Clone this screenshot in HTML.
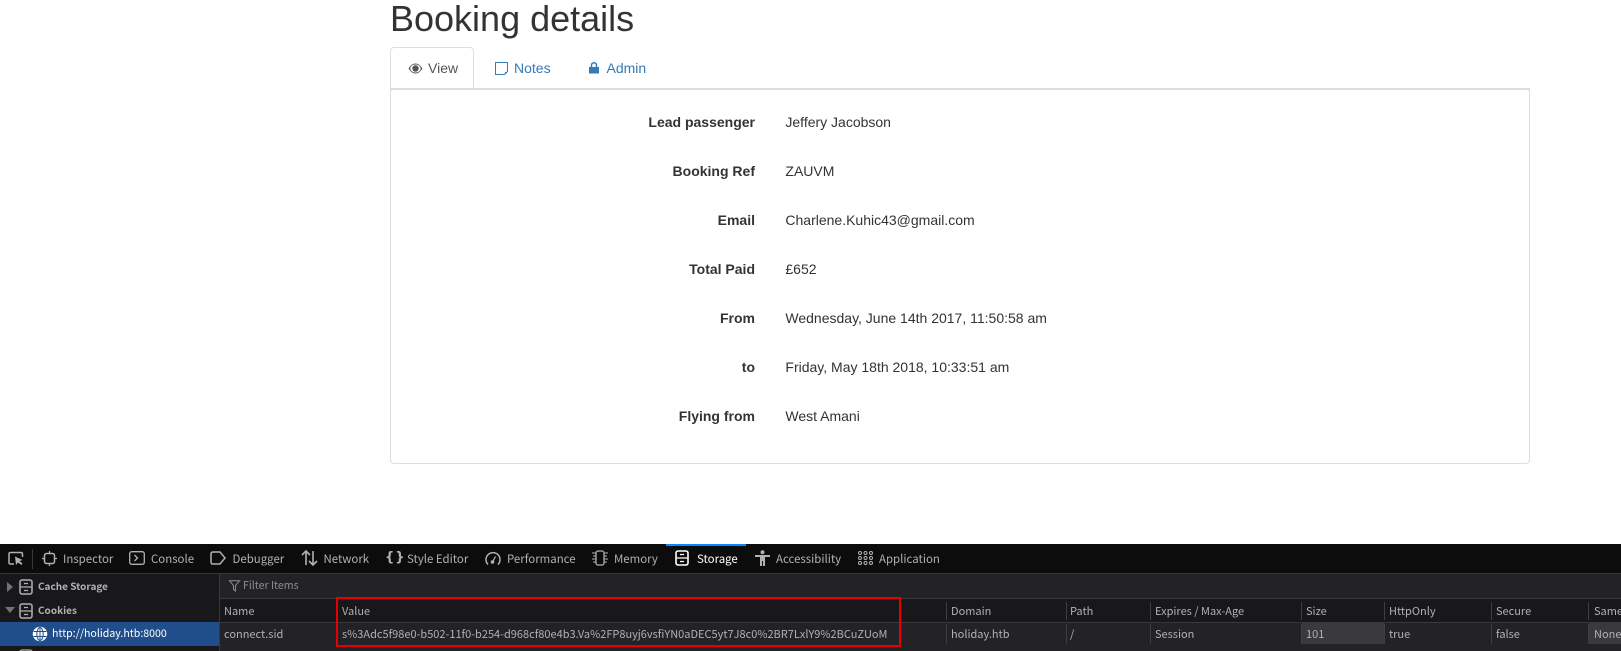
<!DOCTYPE html>
<html><head><meta charset="utf-8">
<style>
html,body{margin:0;padding:0;background:#fff;width:1621px;height:651px;overflow:hidden}
body{position:relative;font-family:"Liberation Sans",sans-serif;font-size:14px;color:#333}
.a{position:absolute;white-space:nowrap}
h1{position:absolute;margin:0;left:390px;top:-1px;font-size:36px;font-weight:500;line-height:40px;color:#333}
.l{position:absolute;right:866px;font-weight:700;line-height:20px;white-space:nowrap}
.v{position:absolute;left:785.4px;line-height:20px;white-space:nowrap}
.d{position:absolute;left:0;top:544px;width:1621px;height:107px;background:#232327;overflow:hidden;font-family:"Noto Sans CJK JP","Liberation Sans",sans-serif;font-size:11px;color:#b1b1b3}
.d .a{line-height:16px}
.t{top:7px;color:#b1b1b3;font-size:11.45px}
.h,.r{color:#b1b1b3}
.h{top:59px}.r{top:82px}
.sep{position:absolute;width:1px;background:#3f3f43}
svg{position:absolute;overflow:visible}
.s{fill:none;stroke:#b1b1b3;stroke-width:1.3}
</style></head><body>
<h1>Booking details</h1>
<div class="a" style="left:390px;top:47px;width:84px;height:42px;border:1px solid #ddd;border-bottom:0;border-radius:4px 4px 0 0;background:#fff;box-sizing:border-box"></div>
<div class="a" style="left:390px;top:88px;width:1140px;height:376px;border:1px solid #ddd;border-radius:4px;box-sizing:border-box;background:#fff"></div>
<div class="a" style="left:390px;top:88px;width:1140px;height:2px;background:#ddd"></div>
<div class="a" style="left:391px;top:86px;width:82px;height:2px;background:#fff"></div>
<svg style="left:408px;top:62px" width="15" height="13" viewBox="0 0 15 13"><path d="M.5 6.500C3 2.800 5 1.500 7.500 1.500S12 2.800 14.500 6.500C12 10.200 10 11.500 7.500 11.500S3 10.200 .5 6.500Z" fill="#555"/><ellipse cx="7.500" cy="6.500" rx="5.200" ry="4" fill="#fff"/><circle cx="7.500" cy="6.500" r="3.200" fill="#555"/></svg>
<span class="a" style="left:428px;top:58px;line-height:20px;color:#555">View</span>
<svg style="left:495px;top:62px" width="13" height="13" viewBox="0 0 13 13"><path d="M.5.500H12.500V9.500L9.500 12.500H.5Z" fill="none" stroke="#337ab7"/><path d="M12.500 10H10V12.500Z" fill="#337ab7"/></svg>
<span class="a" style="left:514px;top:58px;line-height:20px;color:#337ab7">Notes</span>
<svg style="left:589px;top:62px" width="10" height="12" viewBox="0 0 10 12"><path d="M0 5H10V11.500H0Z" fill="#337ab7"/><path d="M2.500 5V3.200a2.500 2.500 0 0 1 5 0V5" fill="none" stroke="#337ab7" stroke-width="1.500"/></svg>
<span class="a" style="left:606.5px;top:58px;line-height:20px;color:#337ab7">Admin</span>

<div class="l" style="top:112px">Lead passenger</div><div class="v" style="top:112px">Jeffery Jacobson</div>
<div class="l" style="top:161px">Booking Ref</div><div class="v" style="top:161px">ZAUVM</div>
<div class="l" style="top:210px">Email</div><div class="v" style="top:210px">Charlene.Kuhic43@gmail.com</div>
<div class="l" style="top:259px">Total Paid</div><div class="v" style="top:259px">£652</div>
<div class="l" style="top:308px">From</div><div class="v" style="top:308px">Wednesday, June 14th 2017, 11:50:58 am</div>
<div class="l" style="top:357px">to</div><div class="v" style="top:357px">Friday, May 18th 2018, 10:33:51 am</div>
<div class="l" style="top:406px">Flying from</div><div class="v" style="top:406px">West Amani</div>

<div class="d">
<div class="a" style="left:0;top:0;width:1621px;height:29px;background:#0c0c0d;border-bottom:1px solid #38383d;box-sizing:content-box"></div>
<div class="a" style="left:666px;top:0;width:80px;height:2px;background:#0a84ff"></div>
<div class="a" style="left:32px;top:5px;width:1px;height:20px;background:#38383d"></div>

<svg style="left:8px;top:7px" width="17" height="15" viewBox="0 0 17 15"><path d="M6 13H2.500Q1 13 1 11.500V3Q1 1.500 2.500 1.500H13Q14.500 1.500 14.500 3V6" class="s" style="stroke-width:1.500"/><path d="M7 5.500L8 14l2-2.500 3.500 2.500 1-1.500-3-2.500 3-1Z" fill="#b1b1b3"/></svg>
<svg style="left:42px;top:7px" width="15" height="15" viewBox="0 0 15 15"><rect x="2.500" y="2.500" width="10" height="10" rx="2" class="s" style="stroke-width:1.500"/><path d="M7.500 0V2.500M7.500 12.500V15M0 7.500H2.500M12.500 7.500H15" class="s"/></svg>
<span class="a t" style="left:63px">Inspector</span>
<svg style="left:129px;top:7px" width="16" height="14" viewBox="0 0 16 14"><rect x=".7" y=".7" width="14.600" height="12.600" rx="2" class="s"/><path d="M5.500 4L8.500 7 5.500 10" class="s"/></svg>
<span class="a t" style="left:151px">Console</span>
<svg style="left:210px;top:7px" width="16" height="14" viewBox="0 0 16 14"><path d="M3 1H10L15 7 10 13H3Q1 13 1 11V3Q1 1 3 1Z" class="s" style="stroke-width:1.500"/></svg>
<span class="a t" style="left:232.5px">Debugger</span>
<svg style="left:301px;top:6px" width="17" height="16" viewBox="0 0 17 16"><path d="M5 15V1M1 5L5 1 9 5M12 1V15M8 11L12 15 16 11" class="s" style="stroke-width:1.600"/></svg>
<span class="a t" style="left:323.5px">Network</span>
<span class="a" style="left:385px;top:6px;font-size:13px;font-weight:700;color:#b1b1b3;letter-spacing:1px;font-family:'DejaVu Sans',sans-serif">{}</span>
<span class="a t" style="left:407px">Style Editor</span>
<svg style="left:485px;top:7px" width="16" height="15" viewBox="0 0 16 15"><path d="M3 13.500A7 7 0 1 1 13 13.500" class="s" style="stroke-width:1.500"/><path d="M7.500 11L10.500 5.500" class="s"/><circle cx="7.500" cy="11" r="1.800" fill="#b1b1b3"/></svg>
<span class="a t" style="left:507px">Performance</span>
<svg style="left:592px;top:6px" width="16" height="16" viewBox="0 0 16 16"><rect x="4" y="1" width="8" height="14" rx="2" class="s"/><path d="M0 3H4M1 6H4M0 9H4M1 12H4M12 3H16M12 6H15M12 9H16M12 12H15" class="s" style="stroke-width:1"/></svg>
<span class="a t" style="left:614px">Memory</span>
<svg style="left:675px;top:6px" width="14" height="16" viewBox="0 0 14 16"><rect x="1" y="1" width="12" height="14" rx="2" fill="none" stroke="#fff" stroke-width="1.600"/><path d="M1 8H13M5 4.500H9M5 11.500H9" fill="none" stroke="#fff" stroke-width="1.300"/></svg>
<span class="a t" style="left:697px;color:#fff">Storage</span>
<svg style="left:755px;top:6px" width="15" height="16" viewBox="0 0 15 16"><circle cx="7.500" cy="2.200" r="2" fill="#b1b1b3"/><path d="M0 5H15V7H10V16H8V11H7V16H5V7H0Z" fill="#b1b1b3"/></svg>
<span class="a t" style="left:776px">Accessibility</span>
<svg style="left:858px;top:7px" width="15" height="14" viewBox="0 0 15 14" fill="none" stroke="#b1b1b3"><circle cx="2" cy="2" r="1.500"/><circle cx="7.500" cy="2" r="1.500"/><circle cx="13" cy="2" r="1.500"/><circle cx="2" cy="7" r="1.500"/><circle cx="7.500" cy="7" r="1.500"/><circle cx="13" cy="7" r="1.500"/><circle cx="2" cy="12" r="1.500"/><circle cx="7.500" cy="12" r="1.500"/><circle cx="13" cy="12" r="1.500"/></svg>
<span class="a t" style="left:879px">Application</span>

<!-- sidebar -->
<div class="a" style="left:0;top:30px;width:219px;height:77px;background:#18181a;border-right:1px solid #38383d"></div>
<div class="a" style="left:0;top:78px;width:219px;height:24px;background:#204e8a"></div>
<svg style="left:7px;top:38px" width="6" height="10" viewBox="0 0 6 10"><path d="M0 0L6 5 0 10Z" fill="#737373"/></svg>
<svg style="left:5px;top:63px" width="10" height="6" viewBox="0 0 10 6"><path d="M0 0H10L5 6Z" fill="#737373"/></svg>
<svg style="left:19px;top:35px" width="14" height="16" viewBox="0 0 14 16"><rect x="1" y="1" width="12" height="14" rx="2" class="s" style="stroke-width:1.500"/><path d="M1 8H13M5 4.500H9M5 11.500H9" class="s"/></svg>
<svg style="left:19px;top:59px" width="14" height="16" viewBox="0 0 14 16"><rect x="1" y="1" width="12" height="14" rx="2" class="s" style="stroke-width:1.500"/><path d="M1 8H13M5 4.500H9M5 11.500H9" class="s"/></svg>
<svg style="left:19px;top:105px" width="14" height="16" viewBox="0 0 14 16"><rect x="1" y="1" width="12" height="14" rx="2" class="s"/></svg>
<span class="a" style="left:38px;top:34px;font-weight:700;font-size:10px;color:#b1b1b3">Cache Storage</span>
<span class="a" style="left:38px;top:58px;font-weight:700;font-size:10px;color:#b1b1b3">Cookies</span>
<svg style="left:32px;top:82px" width="16" height="16" viewBox="0 0 16 16"><circle cx="8" cy="8" r="7.300" fill="#fff"/><g fill="none" stroke="#204e8a" stroke-width="1"><ellipse cx="8" cy="8" rx="3.200" ry="6.500"/><path d="M8 1V15M1.500 5.500H14.500M1.500 10.500H14.500"/></g></svg>
<span class="a" style="left:52px;top:82px;color:#fff;font-size:10.6px">http://holiday.htb:8000</span>

<!-- filter -->
<svg style="left:229px;top:36px" width="11" height="12" viewBox="0 0 11 12"><path d="M.5.800H10.500L6.500 5.500V11L4.500 9.500V5.500Z" fill="none" stroke="#8f8f92"/></svg>
<span class="a" style="left:243px;top:34px;color:#8f8f92;font-size:10.6px">Filter Items</span>
<div class="a" style="left:220px;top:54px;width:1401px;height:1px;background:#38383d"></div>

<!-- table -->
<div class="a" style="left:220px;top:55px;width:1401px;height:23px;background:#18181a"></div>
<div class="a" style="left:220px;top:78px;width:1401px;height:1px;background:#38383d"></div>
<div class="sep" style="left:946px;top:58px;height:18px"></div>
<div class="sep" style="left:1066px;top:58px;height:18px"></div>
<div class="sep" style="left:1150px;top:58px;height:18px"></div>
<div class="sep" style="left:1301px;top:58px;height:18px"></div>
<div class="sep" style="left:1384px;top:58px;height:18px"></div>
<div class="sep" style="left:1491px;top:58px;height:18px"></div>
<div class="sep" style="left:1588px;top:58px;height:18px"></div>
<div class="sep" style="left:946px;top:80px;height:20px"></div>
<div class="sep" style="left:1066px;top:80px;height:20px"></div>
<div class="sep" style="left:1150px;top:80px;height:20px"></div>
<div class="sep" style="left:1301px;top:80px;height:20px"></div>
<div class="sep" style="left:1384px;top:80px;height:20px"></div>
<div class="sep" style="left:1491px;top:80px;height:20px"></div>
<div class="sep" style="left:1588px;top:80px;height:20px"></div>
<div class="a" style="left:1302px;top:79px;width:82px;height:21px;background:#3a3a3d"></div>
<div class="a" style="left:1589px;top:79px;width:32px;height:21px;background:#3a3a3d"></div>

<span class="a h" style="left:224px">Name</span>
<span class="a h" style="left:342px">Value</span>
<span class="a h" style="left:951px">Domain</span>
<span class="a h" style="left:1070px">Path</span>
<span class="a h" style="left:1155px">Expires / Max-Age</span>
<span class="a h" style="left:1306px">Size</span>
<span class="a h" style="left:1389px">HttpOnly</span>
<span class="a h" style="left:1496px">Secure</span>
<span class="a h" style="left:1594px">SameSite</span>
<span class="a r" style="left:224px">connect.sid</span>
<span class="a r" style="left:342px">s%3Adc5f98e0-b502-11f0-b254-d968cf80e4b3.Va%2FP8uyj6vsfiYN0aDEC5yt7J8c0%2BR7LxlY9%2BCuZUoM</span>
<span class="a r" style="left:951px">holiday.htb</span>
<span class="a r" style="left:1070px">/</span>
<span class="a r" style="left:1155px">Session</span>
<span class="a r" style="left:1306px">101</span>
<span class="a r" style="left:1389px">true</span>
<span class="a r" style="left:1496px">false</span>
<span class="a r" style="left:1594px">None</span>
<div class="a" style="left:336px;top:53px;width:565px;height:50px;border:2px solid #e60000;box-sizing:border-box"></div>
</div>
</body></html>
